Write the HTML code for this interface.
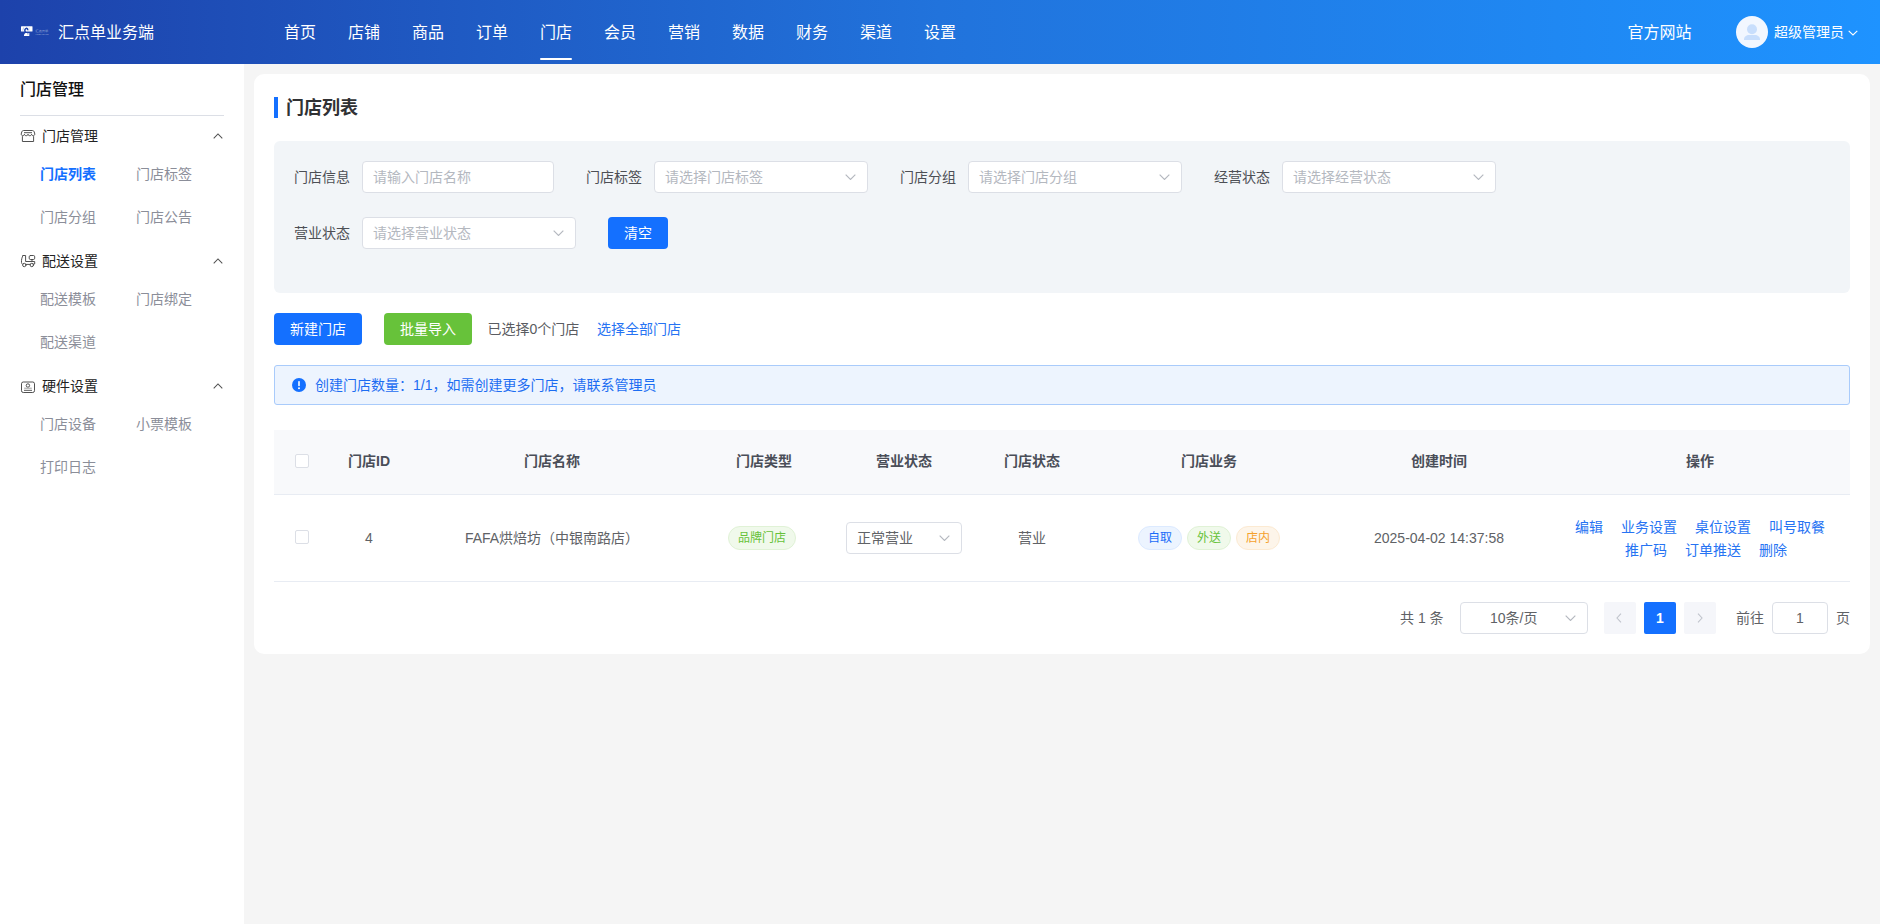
<!DOCTYPE html>
<html lang="zh-CN">
<head>
<meta charset="utf-8">
<title>门店列表</title>
<style>
*{box-sizing:border-box;margin:0;padding:0}
html,body{width:1880px;height:924px;overflow:hidden;background:#f5f5f5}
body{font-family:"Liberation Sans","Noto Sans CJK SC",sans-serif;font-size:14px;color:#333;position:relative}
.abs{position:absolute;white-space:nowrap}
/* header */
#hd{position:absolute;left:0;top:0;width:1880px;height:64px;background:linear-gradient(90deg,#1d42ab,#2173dc,#1e93ff)}
#hd .nav{position:absolute;top:0;height:64px;line-height:65px;font-size:16px;color:#fff;width:32px;text-align:center;white-space:nowrap}
#hd .nav.on:after{content:"";position:absolute;left:0;bottom:4px;width:32px;height:2px;background:#fff;border-radius:1px}
/* sidebar */
#sb{position:absolute;left:0;top:64px;width:244px;height:860px;background:#fff}
.sbt{position:absolute;left:20px;font-size:16px;font-weight:500;color:#111}
.grp{position:absolute;left:42px;font-size:14px;color:#222;line-height:20px}
.itm{position:absolute;font-size:14px;color:#8b8e99;line-height:20px}
.itm.on{color:#1470ff;font-weight:bold}
.car{position:absolute;left:213.200px;width:10px;height:6px}
/* card */
#card{position:absolute;left:254px;top:74px;width:1616px;height:580px;background:#fff;border-radius:10px}
#flt{position:absolute;left:274px;top:141px;width:1576px;height:152px;background:#f2f5f8;border-radius:6px}
.lab{position:absolute;font-size:14px;color:#4d4f55;line-height:32px;height:32px}
.inp{position:absolute;height:32px;border:1px solid #dcdfe6;border-radius:4px;background:#fff;font-size:14px;color:#b4b8bf;line-height:30px;padding-left:10px;white-space:nowrap}
.inp svg{position:absolute;right:11px;top:12px}
.btn{position:absolute;height:32px;line-height:32px;border-radius:4px;color:#fff;font-size:14px;text-align:center;white-space:nowrap}
.th{position:absolute;top:451px;font-size:14px;font-weight:bold;color:#4a4e58;line-height:20px;text-align:center;white-space:nowrap;transform:translateX(-50%)}
.td{position:absolute;font-size:14px;color:#606266;line-height:20px;text-align:center;white-space:nowrap;transform:translateX(-50%)}
.cb{position:absolute;width:14px;height:14px;border:1px solid #dcdfe6;border-radius:2px;background:#fff}
.tag{position:absolute;height:24px;line-height:22px;border-radius:12px;font-size:12px;text-align:center;border:1px solid;white-space:nowrap}
.lnk{position:absolute;font-size:14px;color:#2673f3;line-height:20px;white-space:nowrap}
</style>
</head>
<body>
<div id="hd">
  <svg class="abs" style="left:16px;top:20px" width="40" height="24" viewBox="0 0 40 24">
    <rect x="5" y="6.300" width="11.500" height="5.200" rx=".5" fill="#fff"/>
    <path d="M6.700 10.600L7.700 7.400" stroke="#4a6cc4" stroke-width=".4" fill="none"/>
    <path d="M9.300 12.400C8.300 10.200 9 8.500 10.500 8.200c1.200.3 1.600 1.300 1 2.100" stroke="#1d43ac" stroke-width="1.500" fill="none"/>
    <path d="M13.300 6.800v4.200" stroke="#dfe6f6" stroke-width=".8" fill="none"/>
    <path d="M8 16v-1.300c.5-1.300 1.500-1.700 2.500-1.700h2.800v3z" fill="#fff"/>
    <rect x="11.600" y="13" width=".7" height="1.500" fill="#1d43ac"/>
    <text x="19.200" y="11.600" font-size="2.600" fill="#fff" opacity=".5" font-family="Liberation Sans,Noto Sans CJK SC,sans-serif" textLength="13" lengthAdjust="spacingAndGlyphs">汇点云单</text>
    <text x="19.500" y="14.900" font-size="2.200" fill="#fff" opacity=".55" font-family="Liberation Sans,sans-serif" textLength="13" lengthAdjust="spacingAndGlyphs">HUIDIANYUN</text>
  </svg>
  <div class="abs" style="left:58px;top:0;line-height:65px;font-size:16px;color:#fff">汇点单业务端</div>
  <div class="nav" style="left:284px">首页</div>
  <div class="nav" style="left:348px">店铺</div>
  <div class="nav" style="left:412px">商品</div>
  <div class="nav" style="left:476px">订单</div>
  <div class="nav on" style="left:540px">门店</div>
  <div class="nav" style="left:604px">会员</div>
  <div class="nav" style="left:668px">营销</div>
  <div class="nav" style="left:732px">数据</div>
  <div class="nav" style="left:796px">财务</div>
  <div class="nav" style="left:860px">渠道</div>
  <div class="nav" style="left:924px">设置</div>
  <div class="abs" style="left:1627.5px;top:0;line-height:65px;font-size:16px;color:#fff">官方网站</div>
  <svg class="abs" style="left:1736px;top:16px" width="32" height="32" viewBox="0 0 32 32">
    <circle cx="16" cy="16" r="16" fill="#f2f7ff"/>
    <circle cx="16" cy="13.2" r="5" fill="#c8defc"/>
    <path d="M8 23.5c0-3 2.5-4.5 5-4.5h6c2.500 0 5 1.500 5 4.500v.5H8z" fill="#c8defc"/>
  </svg>
  <div class="abs" style="left:1774px;top:0;line-height:64.5px;font-size:14px;color:#fff">超级管理员</div>
  <svg class="abs" style="left:1848px;top:29.5px" width="10" height="6" viewBox="0 0 10 6"><path d="M.7.8L5 5l4.300-4.200" fill="none" stroke="#fff" stroke-width="1.100"/></svg>
</div>

<div id="sb">
</div>
<div class="sbt" style="top:78px;line-height:24px">门店管理</div>
<div class="abs" style="left:20px;top:115px;width:204px;height:1px;background:#dcdfe6"></div>

<!-- group 1 -->
<svg class="abs" style="left:20px;top:129px" width="16" height="14" viewBox="0 0 16 14"><g fill="none" stroke="#484848" stroke-width=".95" stroke-linejoin="round"><path d="M3.600 1.500h8.800c.9 0 1.500.5 1.800 1.300l.6 2.200c0 1-.7 1.700-1.600 1.700s-1.600-.6-1.600-1.500c0 .9-.8 1.500-1.800 1.500S8 6.100 8 5.200c0 .9-.8 1.500-1.800 1.500s-1.800-.6-1.800-1.500c0 .9-.7 1.500-1.600 1.500S1.200 6 1.200 5l.6-2.200c.3-.8.900-1.300 1.800-1.300z"/><path d="M4 3.700h8"/><path d="M2.400 7.200v5.300h11.200V7.200"/></g></svg>
<div class="grp" style="top:126px">门店管理</div>
<svg class="car" style="top:133px" viewBox="0 0 10 6"><path d="M.7 5.300L5 1l4.300 4.300" fill="none" stroke="#505050" stroke-width="1.050"/></svg>
<div class="itm on" style="left:40px;top:164px">门店列表</div>
<div class="itm" style="left:136px;top:164px">门店标签</div>
<div class="itm" style="left:40px;top:207px">门店分组</div>
<div class="itm" style="left:136px;top:207px">门店公告</div>
<!-- group 2 -->
<svg class="abs" style="left:20px;top:254px" width="16" height="14" viewBox="0 0 16 14"><g fill="none" stroke="#484848" stroke-width=".95" stroke-linejoin="round" stroke-linecap="round"><path d="M3 1.500h2.600v6h9.100v2.500h-1.100"/><path d="M3 1.500C1.800 3.500 1.300 6 1.500 8.500c.1.700.4 1.200.9 1.600"/><rect x="9.200" y="1.500" width="5.500" height="4" rx="1.300"/><path d="M11.100 5.600h1.900l-.95 1.100z" fill="#484848" stroke-width=".4"/><circle cx="4.300" cy="11" r="1.700"/><circle cx="11.800" cy="11" r="1.700"/><path d="M6 10.400h4.100"/></g></svg>
<div class="grp" style="top:251px">配送设置</div>
<svg class="car" style="top:258px" viewBox="0 0 10 6"><path d="M.7 5.300L5 1l4.300 4.300" fill="none" stroke="#505050" stroke-width="1.050"/></svg>
<div class="itm" style="left:40px;top:289px">配送模板</div>
<div class="itm" style="left:136px;top:289px">门店绑定</div>
<div class="itm" style="left:40px;top:332px">配送渠道</div>
<!-- group 3 -->
<svg class="abs" style="left:20px;top:379px" width="16" height="16" viewBox="0 0 16 16"><g fill="none" stroke="#484848" stroke-width=".95"><rect x="1.500" y="3" width="13" height="10.500" rx="1.800"/><path d="M3 2.600h10" stroke="#aaa" stroke-width=".8"/><circle cx="7.900" cy="6.500" r="1.700"/><path d="M4.200 9.200h7.600" stroke="#999"/><path d="M4 11.400h8" stroke="#777" stroke-width="1.200"/></g></svg>
<div class="grp" style="top:376px">硬件设置</div>
<svg class="car" style="top:383px" viewBox="0 0 10 6"><path d="M.7 5.300L5 1l4.300 4.300" fill="none" stroke="#505050" stroke-width="1.050"/></svg>
<div class="itm" style="left:40px;top:414px">门店设备</div>
<div class="itm" style="left:136px;top:414px">小票模板</div>
<div class="itm" style="left:40px;top:457px">打印日志</div>

<div id="card"></div>
<div class="abs" style="left:274px;top:97px;width:4px;height:21px;background:#1470ff"></div>
<div class="abs" style="left:286px;top:94.500px;font-size:18px;font-weight:bold;color:#303133;line-height:26px">门店列表</div>

<div id="flt"></div>
<div class="lab" style="left:294px;top:161px">门店信息</div>
<div class="inp" style="left:362px;top:161px;width:192px">请输入门店名称</div>
<div class="lab" style="left:586px;top:161px">门店标签</div>
<div class="inp" style="left:654px;top:161px;width:214px">请选择门店标签<svg width="11" height="6.400" viewBox="0 0 12 7"><path d="M.7.700L6 6l5.300-5.300" fill="none" stroke="#b4b8bf" stroke-width="1.250"/></svg></div>
<div class="lab" style="left:900px;top:161px">门店分组</div>
<div class="inp" style="left:968px;top:161px;width:214px">请选择门店分组<svg width="11" height="6.400" viewBox="0 0 12 7"><path d="M.7.700L6 6l5.300-5.300" fill="none" stroke="#b4b8bf" stroke-width="1.250"/></svg></div>
<div class="lab" style="left:1214px;top:161px">经营状态</div>
<div class="inp" style="left:1282px;top:161px;width:214px">请选择经营状态<svg width="11" height="6.400" viewBox="0 0 12 7"><path d="M.7.700L6 6l5.300-5.300" fill="none" stroke="#b4b8bf" stroke-width="1.250"/></svg></div>
<div class="lab" style="left:294px;top:217px">营业状态</div>
<div class="inp" style="left:362px;top:217px;width:214px">请选择营业状态<svg width="11" height="6.400" viewBox="0 0 12 7"><path d="M.7.700L6 6l5.300-5.300" fill="none" stroke="#b4b8bf" stroke-width="1.250"/></svg></div>
<div class="btn" style="left:608px;top:217px;width:60px;background:#1470ff">清空</div>

<div class="btn" style="left:274px;top:313px;width:88px;background:#1470ff">新建门店</div>
<div class="btn" style="left:384px;top:313px;width:88px;background:#67c23a">批量导入</div>
<div class="abs" style="left:487.500px;top:319px;line-height:20px;font-size:14px;color:#5a5c61">已选择0个门店</div>
<div class="lnk" style="left:597px;top:319px">选择全部门店</div>

<div class="abs" style="left:274px;top:365px;width:1576px;height:40px;background:#edf4fe;border:1px solid #a9cbfb;border-radius:3px"></div>
<svg class="abs" style="left:292px;top:378px" width="14" height="14" viewBox="0 0 14 14"><circle cx="7" cy="7" r="7" fill="#1470ff"/><rect x="6.200" y="3" width="1.600" height="5.200" rx=".8" fill="#fff"/><circle cx="7" cy="10.200" r="1" fill="#fff"/></svg>
<div class="abs" style="left:315px;top:375px;line-height:20px;font-size:14px;color:#1c6df2">创建门店数量：1/1，如需创建更多门店，请联系管理员</div>

<!-- table -->
<div class="abs" style="left:274px;top:430px;width:1576px;height:64px;background:#f8f9fb"></div>
<div class="abs" style="left:274px;top:494px;width:1576px;height:1px;background:#e8ecf3"></div>
<div class="abs" style="left:274px;top:581px;width:1576px;height:1px;background:#e8ecf3"></div>
<div class="cb" style="left:295px;top:454px"></div>
<div class="th" style="left:369px">门店ID</div>
<div class="th" style="left:552px">门店名称</div>
<div class="th" style="left:764px">门店类型</div>
<div class="th" style="left:904px">营业状态</div>
<div class="th" style="left:1032px">门店状态</div>
<div class="th" style="left:1209px">门店业务</div>
<div class="th" style="left:1439px">创建时间</div>
<div class="th" style="left:1700px">操作</div>

<div class="cb" style="left:295px;top:530px"></div>
<div class="td" style="left:369px;top:528px">4</div>
<div class="td" style="left:552px;top:528px">FAFA烘焙坊（中银南路店）</div>
<div class="tag" style="left:728px;top:526px;width:68px;color:#67c23a;background:#f0f9eb;border-color:#e0f2d6">品牌门店</div>
<div class="inp" style="left:846px;top:522px;width:116px;color:#606266">正常营业<svg width="11" height="6.400" viewBox="0 0 12 7"><path d="M.7.700L6 6l5.300-5.300" fill="none" stroke="#b4b8bf" stroke-width="1.250"/></svg></div>
<div class="td" style="left:1032px;top:528px">营业</div>
<div class="tag" style="left:1138px;top:526px;width:44px;color:#1b6cf8;background:#ecf4ff;border-color:#dceaff">自取</div>
<div class="tag" style="left:1187px;top:526px;width:44px;color:#67c23a;background:#f0f9eb;border-color:#e0f2d6">外送</div>
<div class="tag" style="left:1236px;top:526px;width:44px;color:#f5a12d;background:#fdf5ea;border-color:#fcead2">店内</div>
<div class="td" style="left:1439px;top:528px">2025-04-02 14:37:58</div>
<div class="lnk" style="left:1575px;top:517px">编辑</div>
<div class="lnk" style="left:1621px;top:517px">业务设置</div>
<div class="lnk" style="left:1695px;top:517px">桌位设置</div>
<div class="lnk" style="left:1769px;top:517px">叫号取餐</div>
<div class="lnk" style="left:1625px;top:540px">推广码</div>
<div class="lnk" style="left:1685px;top:540px">订单推送</div>
<div class="lnk" style="left:1759px;top:540px">删除</div>

<!-- pagination -->
<div class="abs" style="left:1400px;top:608px;line-height:20px;font-size:14px;color:#606266">共 1 条</div>
<div class="inp" style="left:1460px;top:602px;width:128px;color:#606266;padding-left:29px">10条/页<svg width="11" height="6.400" viewBox="0 0 12 7"><path d="M.7.700L6 6l5.300-5.300" fill="none" stroke="#b4b8bf" stroke-width="1.250"/></svg></div>
<div class="abs" style="left:1604px;top:602px;width:32px;height:32px;background:#f5f6fa;border-radius:2px"></div>
<svg class="abs" style="left:1616px;top:613px" width="6" height="10" viewBox="0 0 6 10"><path d="M5 .7L1 5l4 4.300" fill="none" stroke="#c0c4cc" stroke-width="1.100"/></svg>
<div class="abs" style="left:1644px;top:602px;width:32px;height:32px;background:#1470ff;border-radius:2px;color:#fff;font-weight:bold;font-size:14px;line-height:32px;text-align:center">1</div>
<div class="abs" style="left:1684px;top:602px;width:32px;height:32px;background:#f5f6fa;border-radius:2px"></div>
<svg class="abs" style="left:1697px;top:613px" width="6" height="10" viewBox="0 0 6 10"><path d="M1 .7L5 5 1 9.300" fill="none" stroke="#c0c4cc" stroke-width="1.100"/></svg>
<div class="abs" style="left:1736px;top:608px;line-height:20px;font-size:14px;color:#606266">前往</div>
<div class="inp" style="left:1772px;top:602px;width:56px;color:#606266;padding:0;text-align:center">1</div>
<div class="abs" style="left:1836px;top:608px;line-height:20px;font-size:14px;color:#606266">页</div>
</body>
</html>
